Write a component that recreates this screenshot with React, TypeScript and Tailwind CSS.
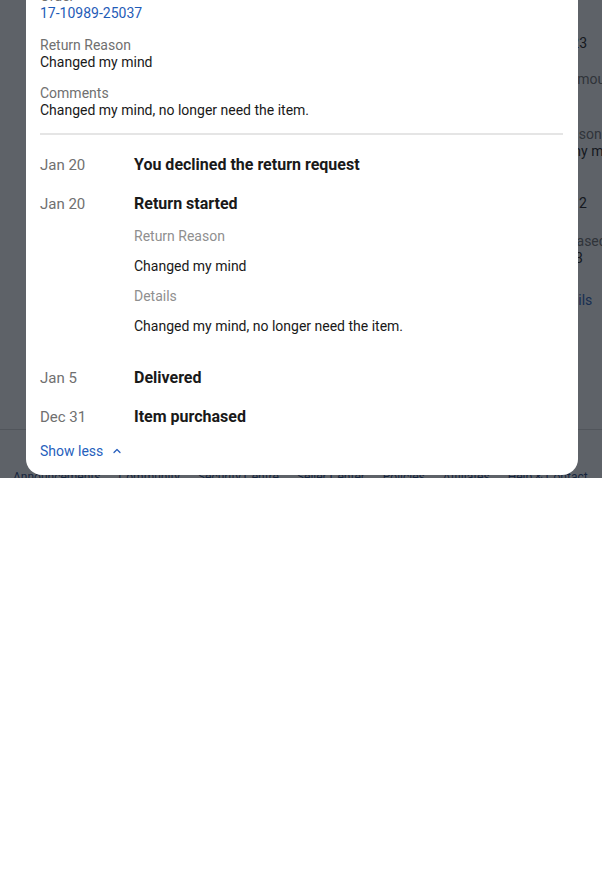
import { ChevronUp } from "lucide-react";

type Event = {
  date: string;
  title: string;
  details?: { label: string; value: string }[];
};

const events: Event[] = [
  { date: "Jan 20", title: "You declined the return request" },
  {
    date: "Jan 20",
    title: "Return started",
    details: [
      { label: "Return Reason", value: "Changed my mind" },
      { label: "Details", value: "Changed my mind, no longer need the item." },
    ],
  },
  { date: "Jan 5", title: "Delivered" },
  { date: "Dec 31", title: "Item purchased" },
];

const summary = [
  { label: "Order", value: "17-10989-25037", link: true },
  { label: "Return Reason", value: "Changed my mind" },
  { label: "Comments", value: "Changed my mind, no longer need the item." },
];

const footerLinks = ["Announcements", "Community", "Security Centre", "Seller Center", "Policies", "Affiliates", "Help & Contact"];

function BackgroundPage() {
  return (
    <div className="flex h-full flex-col text-[14px] leading-[17px]">
      <div className="flex h-[430px] shrink-0 flex-col border-b border-[#d6d6d6] pt-[35px]">
        <span className="ml-[544px] whitespace-nowrap text-[#191919]">$12.23</span>
        <span className="ml-[568px] mt-[19px] whitespace-nowrap text-[#707070]">Amount</span>
        <span className="ml-[555px] mt-[38px] whitespace-nowrap text-[#707070]">Reason</span>
        <span className="ml-[510px] whitespace-nowrap text-[#191919]">Changed my mind</span>
        <span className="ml-[579px] mt-[35px] whitespace-nowrap text-[#191919]">2</span>
        <span className="ml-[509px] mt-[21px] whitespace-nowrap text-[#707070]">Date purchased</span>
        <span className="ml-[502px] whitespace-nowrap text-[#191919]">Dec 31, 2023</span>
        <span className="ml-[517px] mt-[25px] whitespace-nowrap text-[#1f5cb7]">View details</span>
      </div>
      <div className="flex shrink-0 gap-[18px] whitespace-nowrap pl-[13px] pt-[39px] text-[12px] leading-[16px] text-[#1e3f7a]">
        {footerLinks.map((l) => (
          <span key={l}>{l}</span>
        ))}
      </div>
    </div>
  );
}

export default function App() {
  return (
    <div className="relative h-[478px] overflow-hidden bg-white font-['Roboto',sans-serif]">
      <BackgroundPage />
      <div className="absolute inset-0 bg-[#111820]/[0.68]" />

      <div className="absolute left-[26px] right-[24px] top-[-24px] rounded-b-[16px] bg-white pb-[14px] pl-[14px] pr-[15px] pt-[12px] text-[#191919]">
        <div className="flex flex-col gap-[14.5px] text-[14px] leading-[17px]">
          {summary.map((s) => (
            <div key={s.label} className="flex flex-col">
              <span className="text-[#707070]">{s.label}</span>
              <span className={s.link ? "text-[#1f5cb7]" : ""}>{s.value}</span>
            </div>
          ))}
        </div>

        <div className="mt-[14px] h-[2px] bg-[#e5e5e5]" />

        <div className="mt-[20px] flex flex-col gap-[19px]">
          {events.map((e, i) => (
            <div key={i} className="flex">
              <span className="w-[94px] shrink-0 text-[15px] leading-[20px] text-[#707070]">{e.date}</span>
              <div className="flex flex-col">
                <span className="text-[16px] font-bold leading-[20px]">{e.title}</span>
                {e.details && (
                  <div className="mb-[13px] mt-[12px] flex flex-col gap-[10px] text-[14px] leading-[20px]">
                    {e.details.map((d) => (
                      <div key={d.label} className="contents">
                        <span className="text-[#8f8f8f]">{d.label}</span>
                        <span>{d.value}</span>
                      </div>
                    ))}
                  </div>
                )}
              </div>
            </div>
          ))}
        </div>

        <button className="mt-[14px] flex items-center gap-[8px] text-[14px] leading-[20px] text-[#275fbd]">
          Show less
          <ChevronUp size={12} strokeWidth={2.5} />
        </button>
      </div>
    </div>
  );
}
